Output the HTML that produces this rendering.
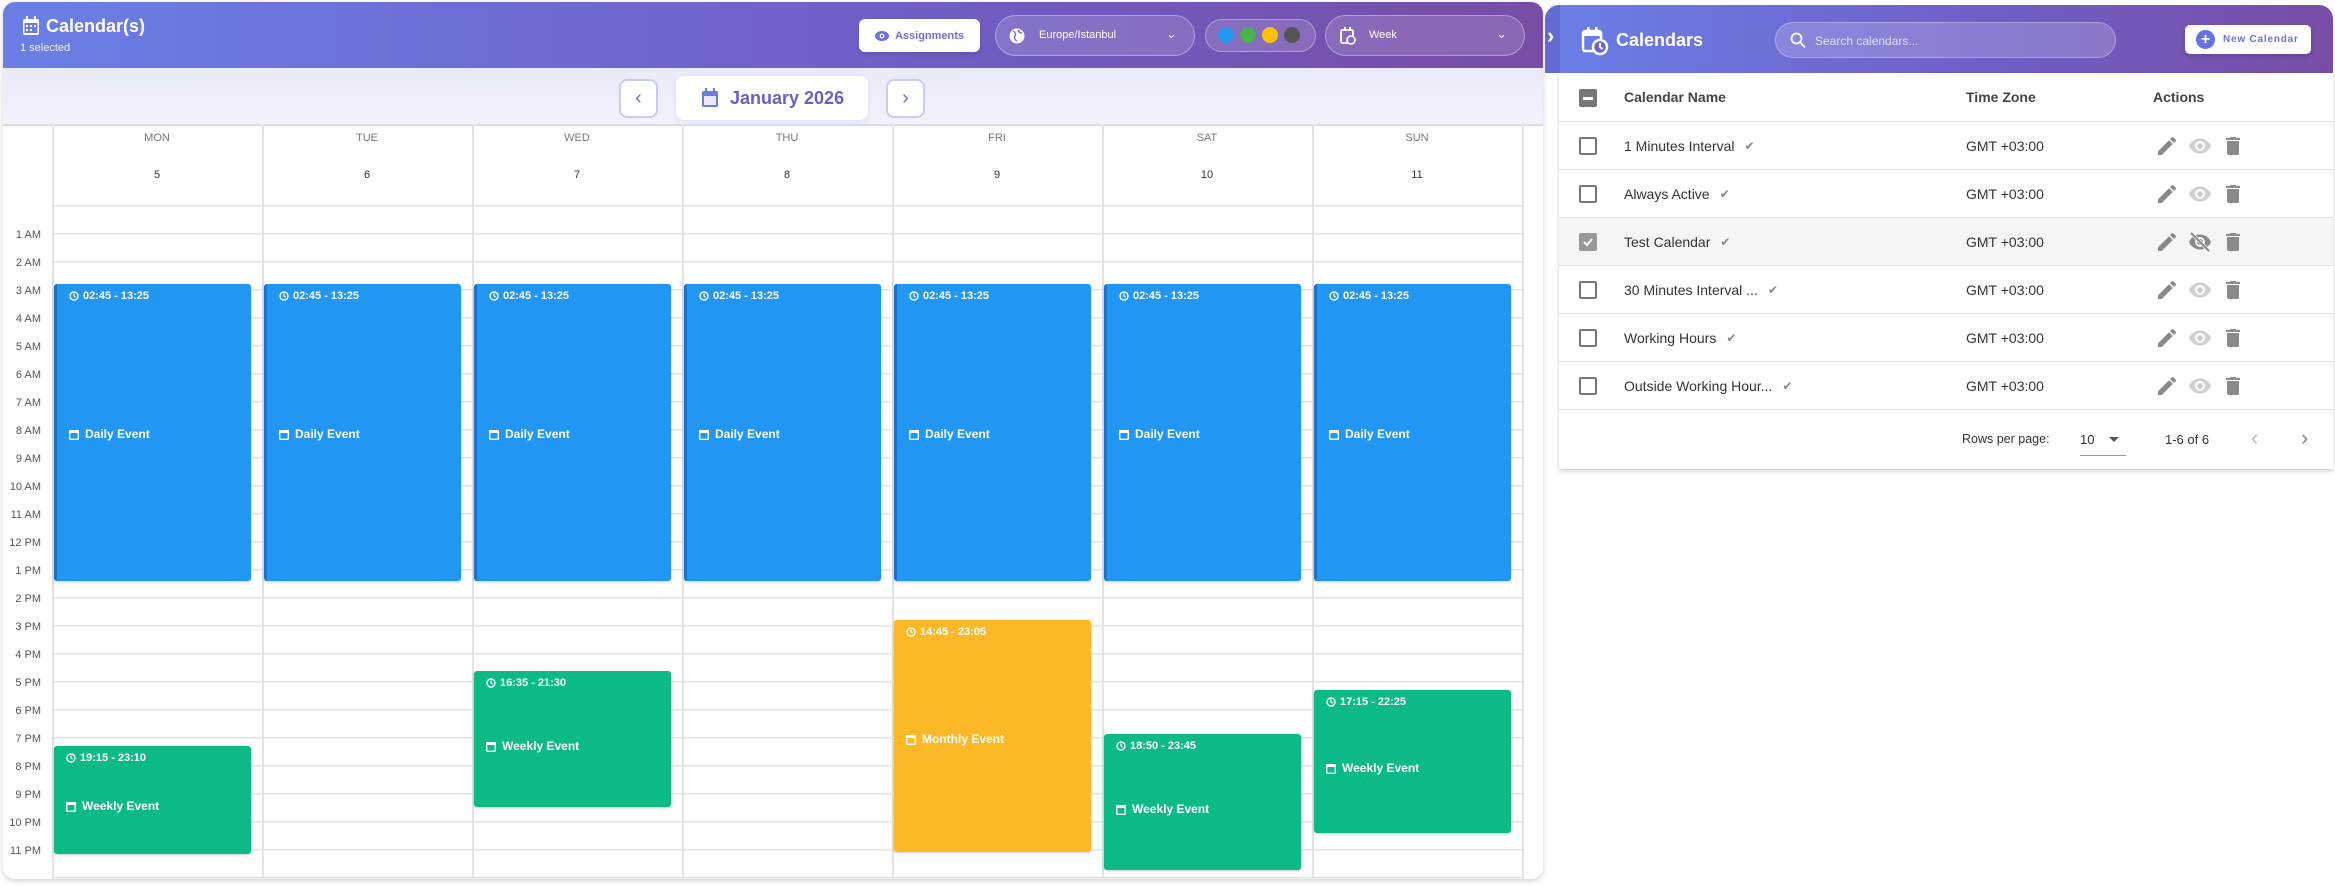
<!DOCTYPE html>
<html><head><meta charset="utf-8"><style>
*{box-sizing:border-box;margin:0;padding:0}
body{width:2335px;height:886px;background:#fff;font-family:"Liberation Sans",sans-serif;position:relative;overflow:hidden}
.a{position:absolute}
.left{left:3px;top:2px;width:1540px;height:877px;border-radius:12px;box-shadow:0 2px 6px rgba(0,0,0,.18);overflow:hidden;background:#fff}
.hdr{left:0;top:0;width:1540px;height:66px;background:linear-gradient(90deg,#6a7fe6 0%,#7060c8 55%,#774da6 100%)}
.nav{left:0;top:66px;width:1540px;height:58px;background:linear-gradient(180deg,#e9ebfb,#f3f2fb);border-bottom:2px solid #d8dbf5}
.wht{color:#fff}
.pill{border:1.5px solid rgba(255,255,255,.35);background:rgba(255,255,255,.14);border-radius:22px}
.dayn{width:210px;text-align:center;color:#777;font-size:11px}
.grid{left:49px;top:203px;width:1470px;height:674px;background:repeating-linear-gradient(180deg,#e2e2e2 0,#e2e2e2 1.5px,transparent 1.5px,transparent 28px)}
.col{top:122px;width:1.5px;height:755px;background:#e3e3e3}
.tl{width:38px;text-align:right;font-size:11px;color:#555;left:0}
.ev{border-radius:3px;color:#fff;font-weight:bold;box-shadow:0 1px 3px rgba(0,0,0,.2)}
.ev .t{position:absolute;left:12px;top:6px;font-size:11px;display:flex;align-items:center;gap:4px}
.ev .n{position:absolute;left:12px;font-size:12px;display:flex;align-items:center;gap:6px}
.blue{background:#2196f3;border-left:3px solid #1a72c9}
.green{background:#0bba87}
.yel{background:#fdb827}
.right{left:1545px;top:5px;width:788px;height:68px;border-radius:14px 14px 0 0;background:linear-gradient(90deg,#6a7fe6 0%,#7060c8 55%,#774da6 100%)}
.tbl{left:1559px;top:73px;width:774px;height:396px;background:#fff;box-shadow:0 2px 4px rgba(0,0,0,.2)}
.row{left:0;width:774px;height:48px;border-bottom:1.5px solid #e4e4e4}
.cb{position:absolute;left:20px;top:15px;width:18px;height:18px;border:2px solid #777;border-radius:2px}
.nm{position:absolute;left:65px;top:16px;font-size:14px;color:#333;display:flex;align-items:center;gap:10px}
.tz{position:absolute;left:407px;top:16px;font-size:14px;color:#333}
.ic{position:absolute;top:12px}
</style></head><body>

<div class="a left">
 <div class="a hdr">
  <svg class="a" style="left:18px;top:13px" width="20" height="22" viewBox="0 0 20 22"><rect x="2" y="4" width="16" height="16" rx="2" fill="#fff"/><rect x="5" y="1" width="2" height="5" fill="#fff"/><rect x="13" y="1" width="2" height="5" fill="#fff"/><rect x="3.5" y="8" width="13" height="10" fill="#6c7bdf"/><g fill="#fff"><rect x="5" y="10" width="2" height="2"/><rect x="9" y="10" width="2" height="2"/><rect x="13" y="10" width="2" height="2"/><rect x="5" y="14" width="2" height="2"/><rect x="9" y="14" width="2" height="2"/></g></svg>
  <div class="a wht" style="left:43px;top:14px;font-size:18px;font-weight:bold">Calendar(s)</div>
  <div class="a wht" style="left:17px;top:40px;font-size:11px;opacity:.9">1 selected</div>
  <div class="a" style="left:856px;top:17px;width:121px;height:33px;background:#fff;border-radius:6px;box-shadow:0 2px 4px rgba(0,0,0,.15);font-size:11px;font-weight:bold;color:#6c72d8;display:flex;align-items:center;justify-content:center;gap:6px"><svg width="14" height="10" viewBox="0 0 14 10"><ellipse cx="7" cy="5" rx="7" ry="5" fill="#6c72d8"/><circle cx="7" cy="5" r="2.4" fill="#fff"/><circle cx="7" cy="5" r="1.2" fill="#6c72d8"/></svg>Assignments</div>
  <div class="a pill" style="left:992px;top:13px;width:200px;height:41px"><svg class="a" style="left:13px;top:12px" width="16" height="16" viewBox="0 0 16 16"><circle cx="8" cy="8" r="7.5" fill="#fff"/><path d="M4 3c2 1 3 3 2 5s0 4 2 5M10 2c-1 2 1 3 3 3" stroke="#7a6fd0" stroke-width="1.5" fill="none"/></svg><div class="a wht" style="left:43px;top:13px;font-size:11px">Europe/Istanbul</div><div class="a wht" style="left:170px;top:10px;font-size:13px">&#8964;</div></div>
  <div class="a pill" style="left:1202px;top:17px;width:111px;height:33px"><div class="a" style="left:12px;top:7px;width:16px;height:16px;border-radius:50%;background:#2196f3"></div><div class="a" style="left:34px;top:7px;width:16px;height:16px;border-radius:50%;background:#4caf50"></div><div class="a" style="left:56px;top:7px;width:16px;height:16px;border-radius:50%;background:#ffc107"></div><div class="a" style="left:78px;top:7px;width:16px;height:16px;border-radius:50%;background:#555"></div></div>
  <div class="a pill" style="left:1322px;top:13px;width:200px;height:41px"><svg class="a" style="left:14px;top:11px" width="16" height="18" viewBox="0 0 16 18"><rect x="1" y="3" width="12" height="13" rx="1.5" fill="none" stroke="#fff" stroke-width="1.8"/><rect x="4" y="0" width="2" height="4" fill="#fff"/><rect x="9" y="0" width="2" height="4" fill="#fff"/><circle cx="11" cy="13" r="4" fill="#7a6fd0" stroke="#fff" stroke-width="1.6"/></svg><div class="a wht" style="left:43px;top:13px;font-size:11px">Week</div><div class="a wht" style="left:170px;top:10px;font-size:13px">&#8964;</div></div>
 </div>
 <div class="a nav">
  <div class="a" style="left:616px;top:11px;width:39px;height:39px;background:#fff;border:2px solid #c8cbf2;border-radius:8px;color:#6c72d8;font-size:20px;text-align:center;line-height:34px">&#8249;</div>
  <div class="a" style="left:673px;top:8px;width:192px;height:44px;background:#fff;border-radius:8px;box-shadow:0 2px 6px rgba(100,100,200,.12)"><svg class="a" style="left:25px;top:12px" width="18" height="20" viewBox="0 0 18 20"><rect x="1" y="3" width="16" height="16" rx="2" fill="#6c7bdf"/><rect x="4" y="0" width="2" height="5" fill="#6c7bdf"/><rect x="12" y="0" width="2" height="5" fill="#6c7bdf"/><rect x="3" y="8" width="12" height="9" fill="#e9ebfb"/></svg><div class="a" style="left:54px;top:12px;font-size:18px;font-weight:bold;color:#6b5fc4">January 2026</div></div>
  <div class="a" style="left:883px;top:11px;width:39px;height:39px;background:#fff;border:2px solid #c8cbf2;border-radius:8px;color:#6c72d8;font-size:20px;text-align:center;line-height:34px">&#8250;</div>
 </div>

 <div class="a dayn" style="left:49px;top:130px">MON</div><div class="a dayn" style="left:259px;top:130px">TUE</div><div class="a dayn" style="left:469px;top:130px">WED</div><div class="a dayn" style="left:679px;top:130px">THU</div><div class="a dayn" style="left:889px;top:130px">FRI</div><div class="a dayn" style="left:1099px;top:130px">SAT</div><div class="a dayn" style="left:1309px;top:130px">SUN</div>
 <div class="a dayn" style="left:49px;top:167px;color:#333">5</div><div class="a dayn" style="left:259px;top:167px;color:#333">6</div><div class="a dayn" style="left:469px;top:167px;color:#333">7</div><div class="a dayn" style="left:679px;top:167px;color:#333">8</div><div class="a dayn" style="left:889px;top:167px;color:#333">9</div><div class="a dayn" style="left:1099px;top:167px;color:#333">10</div><div class="a dayn" style="left:1309px;top:167px;color:#333">11</div>

 <div class="a grid"></div>
 <div class="a col" style="left:49px"></div><div class="a col" style="left:259px"></div><div class="a col" style="left:469px"></div><div class="a col" style="left:679px"></div><div class="a col" style="left:889px"></div><div class="a col" style="left:1099px"></div><div class="a col" style="left:1309px"></div><div class="a col" style="left:1519px"></div>

 <div class="a tl" style="top:227px">1 AM</div><div class="a tl" style="top:255px">2 AM</div><div class="a tl" style="top:283px">3 AM</div><div class="a tl" style="top:311px">4 AM</div><div class="a tl" style="top:339px">5 AM</div><div class="a tl" style="top:367px">6 AM</div><div class="a tl" style="top:395px">7 AM</div><div class="a tl" style="top:423px">8 AM</div><div class="a tl" style="top:451px">9 AM</div><div class="a tl" style="top:479px">10 AM</div><div class="a tl" style="top:507px">11 AM</div><div class="a tl" style="top:535px">12 PM</div><div class="a tl" style="top:563px">1 PM</div><div class="a tl" style="top:591px">2 PM</div><div class="a tl" style="top:619px">3 PM</div><div class="a tl" style="top:647px">4 PM</div><div class="a tl" style="top:675px">5 PM</div><div class="a tl" style="top:703px">6 PM</div><div class="a tl" style="top:731px">7 PM</div><div class="a tl" style="top:759px">8 PM</div><div class="a tl" style="top:787px">9 PM</div><div class="a tl" style="top:815px">10 PM</div><div class="a tl" style="top:843px">11 PM</div>

 <div class="a ev blue" style="left:51px;top:282px;width:197px;height:297px"><div class="t"><svg width="10" height="10" viewBox="0 0 10 10"><circle cx="5" cy="5" r="4" fill="none" stroke="#fff" stroke-width="1.4"/><path d="M5 2.5V5l1.6 1.3" stroke="#fff" stroke-width="1.2" fill="none"/></svg>02:45 - 13:25</div><div class="n" style="top:143px"><svg width="10" height="11" viewBox="0 0 10 11"><rect x="0.7" y="1.7" width="8.6" height="8.6" rx="1" fill="none" stroke="#fff" stroke-width="1.4"/><rect x="0" y="1" width="10" height="3" fill="#fff"/></svg>Daily Event</div></div>
 <div class="a ev blue" style="left:261px;top:282px;width:197px;height:297px"><div class="t"><svg width="10" height="10" viewBox="0 0 10 10"><circle cx="5" cy="5" r="4" fill="none" stroke="#fff" stroke-width="1.4"/><path d="M5 2.5V5l1.6 1.3" stroke="#fff" stroke-width="1.2" fill="none"/></svg>02:45 - 13:25</div><div class="n" style="top:143px"><svg width="10" height="11" viewBox="0 0 10 11"><rect x="0.7" y="1.7" width="8.6" height="8.6" rx="1" fill="none" stroke="#fff" stroke-width="1.4"/><rect x="0" y="1" width="10" height="3" fill="#fff"/></svg>Daily Event</div></div>
 <div class="a ev blue" style="left:471px;top:282px;width:197px;height:297px"><div class="t"><svg width="10" height="10" viewBox="0 0 10 10"><circle cx="5" cy="5" r="4" fill="none" stroke="#fff" stroke-width="1.4"/><path d="M5 2.5V5l1.6 1.3" stroke="#fff" stroke-width="1.2" fill="none"/></svg>02:45 - 13:25</div><div class="n" style="top:143px"><svg width="10" height="11" viewBox="0 0 10 11"><rect x="0.7" y="1.7" width="8.6" height="8.6" rx="1" fill="none" stroke="#fff" stroke-width="1.4"/><rect x="0" y="1" width="10" height="3" fill="#fff"/></svg>Daily Event</div></div>
 <div class="a ev blue" style="left:681px;top:282px;width:197px;height:297px"><div class="t"><svg width="10" height="10" viewBox="0 0 10 10"><circle cx="5" cy="5" r="4" fill="none" stroke="#fff" stroke-width="1.4"/><path d="M5 2.5V5l1.6 1.3" stroke="#fff" stroke-width="1.2" fill="none"/></svg>02:45 - 13:25</div><div class="n" style="top:143px"><svg width="10" height="11" viewBox="0 0 10 11"><rect x="0.7" y="1.7" width="8.6" height="8.6" rx="1" fill="none" stroke="#fff" stroke-width="1.4"/><rect x="0" y="1" width="10" height="3" fill="#fff"/></svg>Daily Event</div></div>
 <div class="a ev blue" style="left:891px;top:282px;width:197px;height:297px"><div class="t"><svg width="10" height="10" viewBox="0 0 10 10"><circle cx="5" cy="5" r="4" fill="none" stroke="#fff" stroke-width="1.4"/><path d="M5 2.5V5l1.6 1.3" stroke="#fff" stroke-width="1.2" fill="none"/></svg>02:45 - 13:25</div><div class="n" style="top:143px"><svg width="10" height="11" viewBox="0 0 10 11"><rect x="0.7" y="1.7" width="8.6" height="8.6" rx="1" fill="none" stroke="#fff" stroke-width="1.4"/><rect x="0" y="1" width="10" height="3" fill="#fff"/></svg>Daily Event</div></div>
 <div class="a ev blue" style="left:1101px;top:282px;width:197px;height:297px"><div class="t"><svg width="10" height="10" viewBox="0 0 10 10"><circle cx="5" cy="5" r="4" fill="none" stroke="#fff" stroke-width="1.4"/><path d="M5 2.5V5l1.6 1.3" stroke="#fff" stroke-width="1.2" fill="none"/></svg>02:45 - 13:25</div><div class="n" style="top:143px"><svg width="10" height="11" viewBox="0 0 10 11"><rect x="0.7" y="1.7" width="8.6" height="8.6" rx="1" fill="none" stroke="#fff" stroke-width="1.4"/><rect x="0" y="1" width="10" height="3" fill="#fff"/></svg>Daily Event</div></div>
 <div class="a ev blue" style="left:1311px;top:282px;width:197px;height:297px"><div class="t"><svg width="10" height="10" viewBox="0 0 10 10"><circle cx="5" cy="5" r="4" fill="none" stroke="#fff" stroke-width="1.4"/><path d="M5 2.5V5l1.6 1.3" stroke="#fff" stroke-width="1.2" fill="none"/></svg>02:45 - 13:25</div><div class="n" style="top:143px"><svg width="10" height="11" viewBox="0 0 10 11"><rect x="0.7" y="1.7" width="8.6" height="8.6" rx="1" fill="none" stroke="#fff" stroke-width="1.4"/><rect x="0" y="1" width="10" height="3" fill="#fff"/></svg>Daily Event</div></div>

 <div class="a ev green" style="left:51px;top:744px;width:197px;height:108px"><div class="t"><svg width="10" height="10" viewBox="0 0 10 10"><circle cx="5" cy="5" r="4" fill="none" stroke="#fff" stroke-width="1.4"/><path d="M5 2.5V5l1.6 1.3" stroke="#fff" stroke-width="1.2" fill="none"/></svg>19:15 - 23:10</div><div class="n" style="top:53px"><svg width="10" height="11" viewBox="0 0 10 11"><rect x="0.7" y="1.7" width="8.6" height="8.6" rx="1" fill="none" stroke="#fff" stroke-width="1.4"/><rect x="0" y="1" width="10" height="3" fill="#fff"/></svg>Weekly Event</div></div>
 <div class="a ev green" style="left:471px;top:669px;width:197px;height:136px"><div class="t"><svg width="10" height="10" viewBox="0 0 10 10"><circle cx="5" cy="5" r="4" fill="none" stroke="#fff" stroke-width="1.4"/><path d="M5 2.5V5l1.6 1.3" stroke="#fff" stroke-width="1.2" fill="none"/></svg>16:35 - 21:30</div><div class="n" style="top:68px"><svg width="10" height="11" viewBox="0 0 10 11"><rect x="0.7" y="1.7" width="8.6" height="8.6" rx="1" fill="none" stroke="#fff" stroke-width="1.4"/><rect x="0" y="1" width="10" height="3" fill="#fff"/></svg>Weekly Event</div></div>
 <div class="a ev yel" style="left:891px;top:618px;width:197px;height:232px"><div class="t"><svg width="10" height="10" viewBox="0 0 10 10"><circle cx="5" cy="5" r="4" fill="none" stroke="#fff" stroke-width="1.4"/><path d="M5 2.5V5l1.6 1.3" stroke="#fff" stroke-width="1.2" fill="none"/></svg>14:45 - 23:05</div><div class="n" style="top:112px"><svg width="10" height="11" viewBox="0 0 10 11"><rect x="0.7" y="1.7" width="8.6" height="8.6" rx="1" fill="none" stroke="#fff" stroke-width="1.4"/><rect x="0" y="1" width="10" height="3" fill="#fff"/></svg>Monthly Event</div></div>
 <div class="a ev green" style="left:1101px;top:732px;width:197px;height:136px"><div class="t"><svg width="10" height="10" viewBox="0 0 10 10"><circle cx="5" cy="5" r="4" fill="none" stroke="#fff" stroke-width="1.4"/><path d="M5 2.5V5l1.6 1.3" stroke="#fff" stroke-width="1.2" fill="none"/></svg>18:50 - 23:45</div><div class="n" style="top:68px"><svg width="10" height="11" viewBox="0 0 10 11"><rect x="0.7" y="1.7" width="8.6" height="8.6" rx="1" fill="none" stroke="#fff" stroke-width="1.4"/><rect x="0" y="1" width="10" height="3" fill="#fff"/></svg>Weekly Event</div></div>
 <div class="a ev green" style="left:1311px;top:688px;width:197px;height:143px"><div class="t"><svg width="10" height="10" viewBox="0 0 10 10"><circle cx="5" cy="5" r="4" fill="none" stroke="#fff" stroke-width="1.4"/><path d="M5 2.5V5l1.6 1.3" stroke="#fff" stroke-width="1.2" fill="none"/></svg>17:15 - 22:25</div><div class="n" style="top:71px"><svg width="10" height="11" viewBox="0 0 10 11"><rect x="0.7" y="1.7" width="8.6" height="8.6" rx="1" fill="none" stroke="#fff" stroke-width="1.4"/><rect x="0" y="1" width="10" height="3" fill="#fff"/></svg>Weekly Event</div></div>
</div>

<div class="a right">
 <div class="a" style="left:0;top:0;width:15px;height:68px;background:rgba(90,70,180,.35);border-radius:14px 0 0 0"></div>
 <div class="a wht" style="left:2px;top:18px;font-size:22px;font-weight:bold">&#8250;</div>
 <svg class="a" style="left:36px;top:21px" width="28" height="30" viewBox="0 0 28 30"><rect x="2" y="5" width="18" height="20" rx="2" fill="none" stroke="#fff" stroke-width="2.5"/><rect x="6" y="1" width="2.5" height="6" fill="#fff"/><rect x="14" y="1" width="2.5" height="6" fill="#fff"/><rect x="2" y="5" width="18" height="5" fill="#fff"/><circle cx="19" cy="21" r="7" fill="#6f66cf" stroke="#fff" stroke-width="2.5"/><path d="M19 17v4l2.5 2" stroke="#fff" stroke-width="2" fill="none"/></svg>
 <div class="a wht" style="left:71px;top:25px;font-size:18px;font-weight:bold">Calendars</div>
 <div class="a" style="left:230px;top:17px;width:341px;height:36px;border-radius:18px;background:rgba(255,255,255,.18);border:1.5px solid rgba(255,255,255,.3)"><svg class="a" style="left:14px;top:9px" width="16" height="17" viewBox="0 0 16 17"><circle cx="6.5" cy="6.5" r="5" fill="none" stroke="#fff" stroke-width="1.8"/><path d="M10 10l5 5.5" stroke="#fff" stroke-width="1.8"/></svg><div class="a" style="left:39px;top:11px;font-size:12px;color:rgba(255,255,255,.75)">Search calendars...</div></div>
 <div class="a" style="left:640px;top:20px;width:126px;height:29px;background:#fff;border-radius:5px;box-shadow:0 2px 4px rgba(0,0,0,.15)"><div class="a" style="left:11px;top:5px;width:19px;height:19px;border-radius:50%;background:#6674e0;color:#fff;font-weight:bold;font-size:16px;text-align:center;line-height:19px">+</div><div class="a" style="left:38px;top:9px;font-size:10px;font-weight:bold;letter-spacing:.8px;color:#6674e0">New Calendar</div></div>
</div>

<div class="a tbl">
 <div class="a row" style="top:0;height:49px"><div class="cb" style="top:16px;background:#777;border-color:#777"><div class="a" style="left:2px;top:6px;width:10px;height:2.5px;background:#fff"></div></div><div class="nm" style="top:16px;font-weight:bold;color:#444">Calendar Name</div><div class="tz" style="top:16px;font-weight:bold;color:#444">Time Zone</div><div class="a" style="left:594px;top:16px;font-size:14px;font-weight:bold;color:#444">Actions</div></div>

 <div class="a row" style="top:49px"><div class="cb"></div><div class="nm">1 Minutes Interval <span style="color:#888;font-size:12px">&#10004;&#xFE0E;</span></div><div class="tz">GMT +03:00</div>
  <svg class="ic" style="left:596px" width="24" height="24" viewBox="0 0 24 24"><path fill="#8a8a8a" d="M3 17.25V21h3.75L17.81 9.94l-3.75-3.75L3 17.25zM20.71 7.04a1 1 0 000-1.41l-2.34-2.34a1 1 0 00-1.41 0l-1.83 1.83 3.75 3.75 1.83-1.83z"/></svg>
  <svg class="ic" style="left:629px" width="24" height="24" viewBox="0 0 24 24"><path fill="#d0d0d0" d="M12 4.5C7 4.5 2.73 7.61 1 12c1.73 4.39 6 7.5 11 7.5s9.27-3.11 11-7.5c-1.73-4.39-6-7.5-11-7.5zM12 17a5 5 0 110-10 5 5 0 010 10zm0-8a3 3 0 100 6 3 3 0 000-6z"/></svg>
  <svg class="ic" style="left:662px" width="24" height="24" viewBox="0 0 24 24"><path fill="#8a8a8a" d="M6 19a2 2 0 002 2h8a2 2 0 002-2V7H6v12zM19 4h-3.5l-1-1h-5l-1 1H5v2h14V4z"/></svg></div>
 <div class="a row" style="top:97px"><div class="cb"></div><div class="nm">Always Active <span style="color:#888;font-size:12px">&#10004;&#xFE0E;</span></div><div class="tz">GMT +03:00</div>
  <svg class="ic" style="left:596px" width="24" height="24" viewBox="0 0 24 24"><path fill="#8a8a8a" d="M3 17.25V21h3.75L17.81 9.94l-3.75-3.75L3 17.25zM20.71 7.04a1 1 0 000-1.41l-2.34-2.34a1 1 0 00-1.41 0l-1.83 1.83 3.75 3.75 1.83-1.83z"/></svg>
  <svg class="ic" style="left:629px" width="24" height="24" viewBox="0 0 24 24"><path fill="#d0d0d0" d="M12 4.5C7 4.5 2.73 7.61 1 12c1.73 4.39 6 7.5 11 7.5s9.27-3.11 11-7.5c-1.73-4.39-6-7.5-11-7.5zM12 17a5 5 0 110-10 5 5 0 010 10zm0-8a3 3 0 100 6 3 3 0 000-6z"/></svg>
  <svg class="ic" style="left:662px" width="24" height="24" viewBox="0 0 24 24"><path fill="#8a8a8a" d="M6 19a2 2 0 002 2h8a2 2 0 002-2V7H6v12zM19 4h-3.5l-1-1h-5l-1 1H5v2h14V4z"/></svg></div>
 <div class="a row" style="top:145px;background:#f5f5f5"><div class="cb" style="background:#999;border-color:#999"><svg class="a" style="left:1px;top:1px" width="12" height="12" viewBox="0 0 12 12"><path d="M2 6l3 3 5-6" stroke="#fff" stroke-width="2" fill="none"/></svg></div><div class="nm">Test Calendar <span style="color:#888;font-size:12px">&#10004;&#xFE0E;</span></div><div class="tz">GMT +03:00</div>
  <svg class="ic" style="left:596px" width="24" height="24" viewBox="0 0 24 24"><path fill="#8a8a8a" d="M3 17.25V21h3.75L17.81 9.94l-3.75-3.75L3 17.25zM20.71 7.04a1 1 0 000-1.41l-2.34-2.34a1 1 0 00-1.41 0l-1.83 1.83 3.75 3.75 1.83-1.83z"/></svg>
  <svg class="ic" style="left:629px" width="24" height="24" viewBox="0 0 24 24"><path fill="#8a8a8a" d="M12 4.5C7 4.5 2.73 7.61 1 12c1.73 4.39 6 7.5 11 7.5s9.27-3.11 11-7.5c-1.73-4.39-6-7.5-11-7.5zM12 17a5 5 0 110-10 5 5 0 010 10zm0-8a3 3 0 100 6 3 3 0 000-6z"/><path d="M3 3l18 18" stroke="#f5f5f5" stroke-width="3.5"/><path d="M3 3l18 18" stroke="#8a8a8a" stroke-width="2"/></svg>
  <svg class="ic" style="left:662px" width="24" height="24" viewBox="0 0 24 24"><path fill="#8a8a8a" d="M6 19a2 2 0 002 2h8a2 2 0 002-2V7H6v12zM19 4h-3.5l-1-1h-5l-1 1H5v2h14V4z"/></svg></div>
 <div class="a row" style="top:193px"><div class="cb"></div><div class="nm">30 Minutes Interval ... <span style="color:#888;font-size:12px">&#10004;&#xFE0E;</span></div><div class="tz">GMT +03:00</div>
  <svg class="ic" style="left:596px" width="24" height="24" viewBox="0 0 24 24"><path fill="#8a8a8a" d="M3 17.25V21h3.75L17.81 9.94l-3.75-3.75L3 17.25zM20.71 7.04a1 1 0 000-1.41l-2.34-2.34a1 1 0 00-1.41 0l-1.83 1.83 3.75 3.75 1.83-1.83z"/></svg>
  <svg class="ic" style="left:629px" width="24" height="24" viewBox="0 0 24 24"><path fill="#d0d0d0" d="M12 4.5C7 4.5 2.73 7.61 1 12c1.73 4.39 6 7.5 11 7.5s9.27-3.11 11-7.5c-1.73-4.39-6-7.5-11-7.5zM12 17a5 5 0 110-10 5 5 0 010 10zm0-8a3 3 0 100 6 3 3 0 000-6z"/></svg>
  <svg class="ic" style="left:662px" width="24" height="24" viewBox="0 0 24 24"><path fill="#8a8a8a" d="M6 19a2 2 0 002 2h8a2 2 0 002-2V7H6v12zM19 4h-3.5l-1-1h-5l-1 1H5v2h14V4z"/></svg></div>
 <div class="a row" style="top:241px"><div class="cb"></div><div class="nm">Working Hours <span style="color:#888;font-size:12px">&#10004;&#xFE0E;</span></div><div class="tz">GMT +03:00</div>
  <svg class="ic" style="left:596px" width="24" height="24" viewBox="0 0 24 24"><path fill="#8a8a8a" d="M3 17.25V21h3.75L17.81 9.94l-3.75-3.75L3 17.25zM20.71 7.04a1 1 0 000-1.41l-2.34-2.34a1 1 0 00-1.41 0l-1.83 1.83 3.75 3.75 1.83-1.83z"/></svg>
  <svg class="ic" style="left:629px" width="24" height="24" viewBox="0 0 24 24"><path fill="#d0d0d0" d="M12 4.5C7 4.5 2.73 7.61 1 12c1.73 4.39 6 7.5 11 7.5s9.27-3.11 11-7.5c-1.73-4.39-6-7.5-11-7.5zM12 17a5 5 0 110-10 5 5 0 010 10zm0-8a3 3 0 100 6 3 3 0 000-6z"/></svg>
  <svg class="ic" style="left:662px" width="24" height="24" viewBox="0 0 24 24"><path fill="#8a8a8a" d="M6 19a2 2 0 002 2h8a2 2 0 002-2V7H6v12zM19 4h-3.5l-1-1h-5l-1 1H5v2h14V4z"/></svg></div>
 <div class="a row" style="top:289px"><div class="cb"></div><div class="nm">Outside Working Hour... <span style="color:#888;font-size:12px">&#10004;&#xFE0E;</span></div><div class="tz">GMT +03:00</div>
  <svg class="ic" style="left:596px" width="24" height="24" viewBox="0 0 24 24"><path fill="#8a8a8a" d="M3 17.25V21h3.75L17.81 9.94l-3.75-3.75L3 17.25zM20.71 7.04a1 1 0 000-1.41l-2.34-2.34a1 1 0 00-1.41 0l-1.83 1.83 3.75 3.75 1.83-1.83z"/></svg>
  <svg class="ic" style="left:629px" width="24" height="24" viewBox="0 0 24 24"><path fill="#d0d0d0" d="M12 4.5C7 4.5 2.73 7.61 1 12c1.73 4.39 6 7.5 11 7.5s9.27-3.11 11-7.5c-1.73-4.39-6-7.5-11-7.5zM12 17a5 5 0 110-10 5 5 0 010 10zm0-8a3 3 0 100 6 3 3 0 000-6z"/></svg>
  <svg class="ic" style="left:662px" width="24" height="24" viewBox="0 0 24 24"><path fill="#8a8a8a" d="M6 19a2 2 0 002 2h8a2 2 0 002-2V7H6v12zM19 4h-3.5l-1-1h-5l-1 1H5v2h14V4z"/></svg></div>

 <div class="a" style="left:403px;top:359px;font-size:12.5px;color:#333">Rows per page:</div>
 <div class="a" style="left:521px;top:359px;font-size:13px;color:#333">10</div>
 <div class="a" style="left:550px;top:364px;width:0;height:0;border-left:5px solid transparent;border-right:5px solid transparent;border-top:5px solid #555"></div>
 <div class="a" style="left:521px;top:382px;width:46px;height:1px;background:#999"></div>
 <div class="a" style="left:606px;top:359px;font-size:13px;color:#333">1-6 of 6</div>
 <div class="a" style="left:692px;top:352px;font-size:22px;color:#bbb">&#8249;</div>
 <div class="a" style="left:742px;top:352px;font-size:22px;color:#888">&#8250;</div>
</div>
</body></html>
